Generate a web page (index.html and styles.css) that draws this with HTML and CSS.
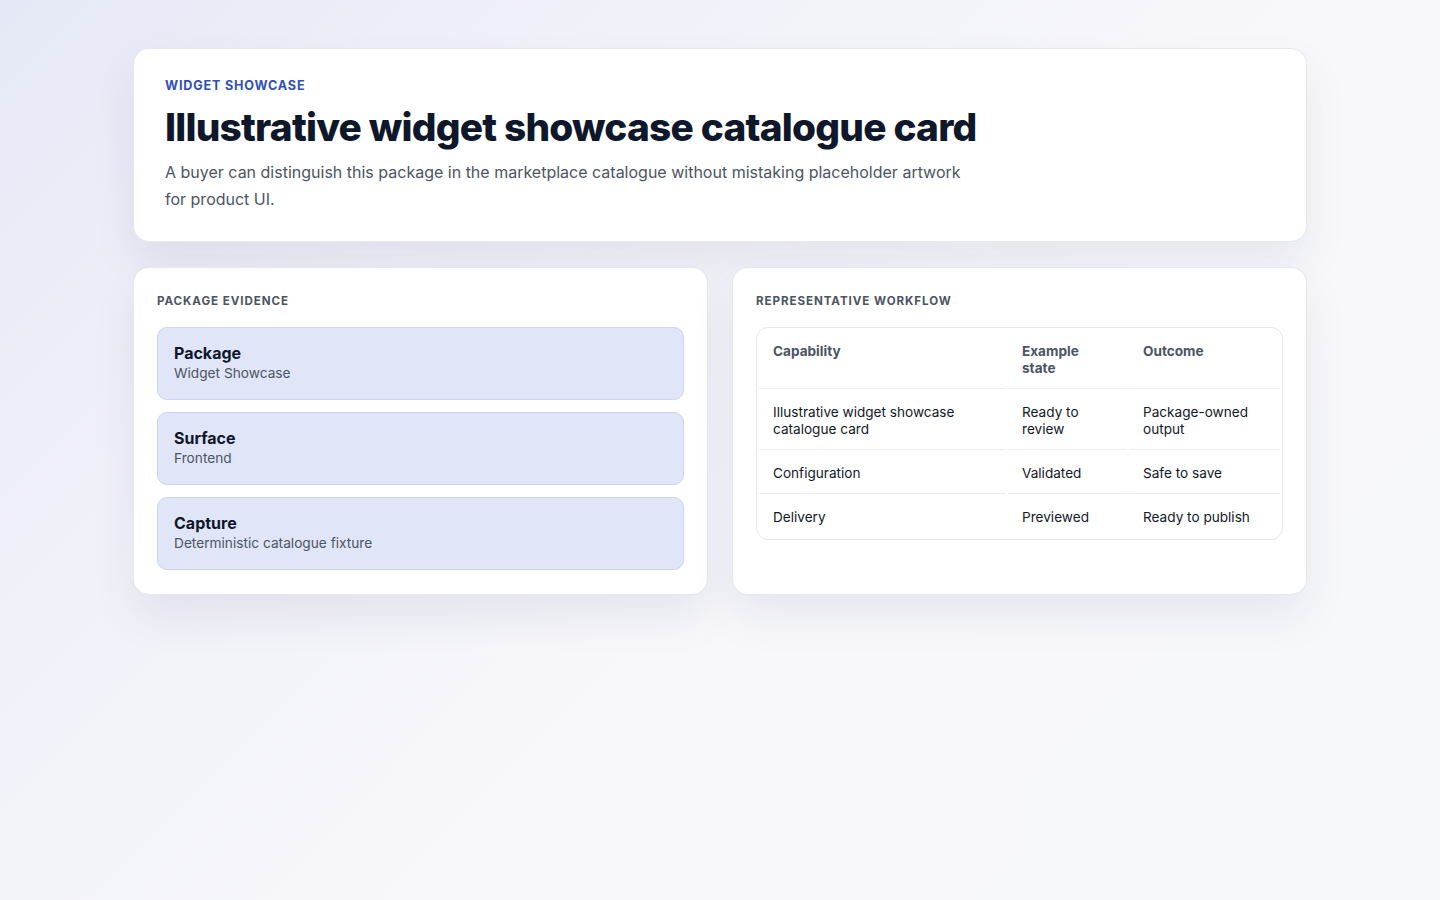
FILE: index.html
```html
<!DOCTYPE html>
<html lang="en">
<head>
<meta charset="utf-8">
<title>Widget Showcase</title>
<link rel="stylesheet" href="styles.css">
</head>
<body>
<main class="page">
  <section class="hero card">
    <p class="eyebrow">Widget Showcase</p>
    <h1 class="title">Illustrative widget showcase catalogue card</h1>
    <p class="lead">A buyer can distinguish this package in the marketplace catalogue without mistaking placeholder artwork for product UI.</p>
  </section>
  <div class="grid">
    <section class="card panel">
      <h2 class="label">Package evidence</h2>
      <div class="items">
        <div class="item"><strong>Package</strong><span>Widget Showcase</span></div>
        <div class="item"><strong>Surface</strong><span>Frontend</span></div>
        <div class="item"><strong>Capture</strong><span>Deterministic catalogue fixture</span></div>
      </div>
    </section>
    <section class="card panel">
      <h2 class="label">Representative workflow</h2>
      <div class="table-wrap">
        <table class="table">
          <colgroup><col class="c1"><col class="c2"><col class="c3"></colgroup>
          <thead>
            <tr><th>Capability</th><th>Example state</th><th>Outcome</th></tr>
          </thead>
          <tbody>
            <tr><td>Illustrative widget showcase catalogue card</td><td>Ready to review</td><td>Package-owned output</td></tr>
            <tr><td>Configuration</td><td>Validated</td><td>Safe to save</td></tr>
            <tr class="last"><td>Delivery</td><td>Previewed</td><td>Ready to publish</td></tr>
          </tbody>
        </table>
      </div>
    </section>
  </div>
</main>
</body>
</html>
```
FILE: styles.css
```css
* { box-sizing: border-box; }
html, body { margin: 0; padding: 0; }
body {
  min-height: 900px;
  font-family: Inter, "Noto Sans", "Liberation Sans", sans-serif;
  color: #111827;
  background: linear-gradient(135deg, #e5e8f6 0%, #f1f2f9 30%, #f8f8fc 60%, #f7f8fc 100%);
}
.page {
  width: 1174px;
  margin: 0 auto;
  padding-top: 48px;
  display: flex;
  flex-direction: column;
  gap: 25px;
}
.card {
  background: #fff;
  border: 1px solid rgba(226, 230, 240, 0.9);
  border-radius: 16px;
  box-shadow: 0 22px 44px rgba(30, 41, 80, 0.08);
}
.hero { padding: 29px 31px 28px; }
.eyebrow {
  margin: 0;
  font-size: 12.6px;
  line-height: 16px;
  font-weight: 700;
  letter-spacing: 0.065em;
  text-transform: uppercase;
  color: #2f4fc0;
}
.title {
  margin: 9px 0 8px;
  font-size: 38.8px;
  line-height: 48px;
  font-weight: 800;
  letter-spacing: -0.02em;
  color: #0f172a;
}
.lead {
  margin: 0;
  max-width: 820px;
  font-size: 16px;
  line-height: 27px;
  color: #4b5563;
}
.grid {
  display: grid;
  grid-template-columns: 1fr 1fr;
  gap: 24px;
}
.panel { padding: 25px 23px 24px; }
.label {
  margin: 0 0 18px;
  font-size: 11.6px;
  line-height: 16px;
  font-weight: 700;
  letter-spacing: 0.08em;
  text-transform: uppercase;
  color: #4b5563;
}
.items { display: flex; flex-direction: column; gap: 12px; }
.item {
  display: flex;
  flex-direction: column;
  padding: 15px 16px 16px;
  background: #e0e5f8;
  border: 1px solid #cdd4ee;
  border-radius: 10px;
}
.item strong { font-size: 16px; line-height: 20px; font-weight: 700; color: #0f172a; }
.item span { font-size: 13.7px; line-height: 20px; color: #4b5563; }
.table-wrap {
  border: 1px solid #e5e7eb;
  border-radius: 12px;
  overflow: hidden;
}
.table {
  width: 100%;
  table-layout: fixed;
  border-collapse: separate;
  border-spacing: 2px 0;
  font-size: 13.6px;
  line-height: 17px;
}
.c1 { width: 247px; }
.c2 { width: 119px; }
.table th, .table td {
  text-align: left;
  vertical-align: top;
  padding: 15px 14px 11px 14px;
  border-bottom: 1px solid #eceef2;
}
.table th { font-weight: 700; color: #4b5563; }
.table td { color: #111827; }
.table tr.last td { border-bottom: none; padding-bottom: 13px; }
```
